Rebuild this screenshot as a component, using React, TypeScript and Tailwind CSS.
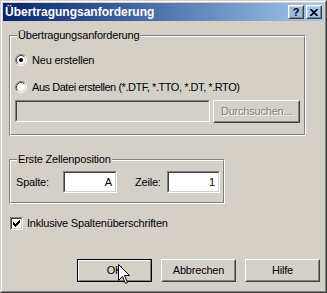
import React from 'react';

const font = "font-['Liberation_Sans',Arial,sans-serif] text-[11px] leading-[13px] tracking-[-0.2px] text-black";

// raised 3d frame, as used by push buttons
const Raised = ({ className = '', children }: { className?: string; children?: React.ReactNode }) => (
  <div className={`border border-t-white border-l-white border-r-[#404040] border-b-[#404040] ${className}`}>
    <div className="w-full h-full border border-t-[#d4d0c8] border-l-[#d4d0c8] border-r-[#808080] border-b-[#808080] flex items-center justify-center">
      {children}
    </div>
  </div>
);

// sunken 3d frame for edit fields
const Sunken = ({ className = '', inner = 'bg-white', children }: { className?: string; inner?: string; children?: React.ReactNode }) => (
  <div className={`border border-t-[#808080] border-l-[#808080] border-r-white border-b-white ${className}`}>
    <div className={`w-full h-full border border-t-[#404040] border-l-[#404040] border-r-[#d4d0c8] border-b-[#d4d0c8] flex items-center ${inner}`}>
      {children}
    </div>
  </div>
);

// etched group box, legend sits over the top line
const Group = ({ title, className = '', children }: { title: string; className?: string; children?: React.ReactNode }) => (
  <div className={`relative border border-t-[#808080] border-l-[#808080] border-r-white border-b-white ${className}`}>
    <div className="w-full h-full border border-t-white border-l-white border-r-[#808080] border-b-[#808080]">
      {children}
    </div>
    <span className="absolute left-[7px] top-[-7px] bg-[#d4d0c8] px-[1px]">{title}</span>
  </div>
);

const Radio = ({ checked }: { checked?: boolean }) => (
  <svg width="12" height="12" viewBox="0 0 12 12" className="shrink-0">
    <circle cx="6" cy="6" r="4.5" fill="#fff" />
    <path d="M2.11 9.89 A5.5 5.5 0 0 1 9.89 2.11" fill="none" stroke="#808080" strokeWidth="1" />
    <path d="M9.89 2.11 A5.5 5.5 0 0 1 2.11 9.89" fill="none" stroke="#fff" strokeWidth="1" />
    <path d="M2.82 9.18 A4.5 4.5 0 0 1 9.18 2.82" fill="none" stroke="#404040" strokeWidth="1" />
    <path d="M9.18 2.82 A4.5 4.5 0 0 1 2.82 9.18" fill="none" stroke="#d4d0c8" strokeWidth="1" />
    {checked && <circle cx="6" cy="6" r="2" fill="#000" />}
  </svg>
);

const checkRows = ['......X', '.....XX', 'X...XXX', 'XX.XXX.', 'XXXXX..', '.XXX...', '..X....'];

const Check = () => (
  <Sunken className="w-[13px] h-[13px] shrink-0">
    <svg width="9" height="9" viewBox="0 0 9 9" shapeRendering="crispEdges">
      {checkRows.map((row, y) =>
        row.split('').map((c, x) => (c === 'X' ? <rect key={`${x}-${y}`} x={x + 1} y={y + 1} width="1" height="1" fill="#000" /> : null))
      )}
    </svg>
  </Sunken>
);

const Cursor = () => (
  <svg width="13" height="21" viewBox="0 0 13 21" className="absolute left-[117px] top-[263px]">
    <path d="M0.5 0.5 L0.5 16.5 L4.5 12.5 L7.5 19.5 L9.5 18.5 L6.5 11.5 L11.5 11.5 Z" fill="#fff" stroke="#000" strokeWidth="1" strokeLinejoin="miter" />
  </svg>
);

export default function App() {
  return (
    <div className={`relative w-[327px] h-[293px] bg-[#d4d0c8] border border-t-[#d4d0c8] border-l-[#d4d0c8] border-r-[#404040] border-b-[#404040] ${font}`}>
      <div className="w-full h-full border border-t-white border-l-white border-r-[#808080] border-b-[#808080] p-[1px]">
        {/* title bar */}
        <div className="h-[18px] flex items-center bg-gradient-to-r from-[#0a246a] to-[#a6caf0] pl-[2px] pr-[2px]">
          <span className="font-bold text-white text-[12px] tracking-normal">Übertragungsanforderung</span>
          <div className="ml-auto flex gap-[2px]">
            <Raised className="w-[16px] h-[14px]">
              <span className="font-bold text-[11px] leading-[10px]">?</span>
            </Raised>
            <Raised className="w-[16px] h-[14px]">
              <svg width="8" height="7" viewBox="0 0 8 7">
                <path d="M0.5 0 L7.5 7 M7.5 0 L0.5 7" stroke="#000" strokeWidth="1.6" />
              </svg>
            </Raised>
          </div>
        </div>

        {/* transfer group */}
        <Group title="Übertragungsanforderung" className="ml-[6px] mt-[14px] w-[297px] h-[101px]">
          <div className="pl-[4px] pt-[16px] flex flex-col">
            <div className="h-[14px] flex items-center gap-[5px]">
              <Radio checked />
              <span>Neu erstellen</span>
            </div>
            <div className="h-[14px] mt-[13px] flex items-center gap-[5px]">
              <Radio />
              <span className="tracking-[-0.45px]">Aus Datei erstellen (*.DTF, *.TTO, *.DT, *.RTO)</span>
            </div>
            <div className="mt-[6px] flex items-start gap-[3px]">
              <Sunken className="w-[195px] h-[22px]" inner="bg-[#d4d0c8]" />
              <Raised className="w-[87px] h-[23px]">
                <span className="text-[#808080] [text-shadow:1px_1px_0_#fff]">Durchsuchen...</span>
              </Raised>
            </div>
          </div>
        </Group>

        {/* cell position */}
        <Group title="Erste Zellenposition" className="ml-[6px] mt-[23px] w-[216px] h-[45px]">
          <div className="pl-[5px] pt-[10px] flex items-center">
            <span className="w-[47px]">Spalte:</span>
            <Sunken className="w-[54px] h-[22px]">
              <span className="ml-auto pr-[3px]">A</span>
            </Sunken>
            <span className="ml-[18px] w-[32px]">Zeile:</span>
            <Sunken className="w-[53px] h-[22px]">
              <span className="ml-auto pr-[3px]">1</span>
            </Sunken>
          </div>
        </Group>

        <div className="ml-[7px] mt-[13px] flex items-center gap-[4px]">
          <Check />
          <span>Inklusive Spaltenüberschriften</span>
        </div>

        {/* buttons */}
        <div className="ml-[74px] mt-[29px] flex gap-[9px]">
          <div className="w-[75px] h-[23px] border border-black">
            <div className="w-full h-full border border-t-white border-l-white border-r-[#808080] border-b-[#808080] flex items-center justify-center">
              OK
            </div>
          </div>
          <Raised className="w-[75px] h-[23px]">Abbrechen</Raised>
          <Raised className="w-[75px] h-[23px]">Hilfe</Raised>
        </div>
      </div>
      <Cursor />
    </div>
  );
}
